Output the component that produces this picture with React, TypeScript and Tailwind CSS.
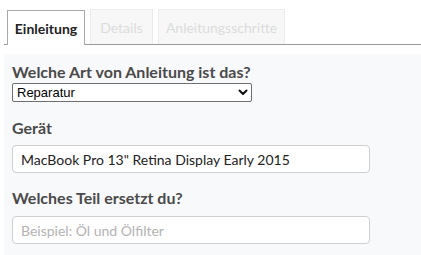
import React from 'react';

const tabs = [
  { label: 'Einleitung', active: true, w: 'w-[78px]' },
  { label: 'Details', active: false, w: 'w-[63px]' },
  { label: 'Anleitungsschritte', active: false, w: 'w-[127px]' },
];

const App: React.FC = () => {
  return (
    <div className="w-[421px] h-[255px] bg-white pl-1 pt-[9px] overflow-hidden" style={{ fontFamily: 'Lato, "Open Sans", sans-serif' }}>
      {/* tab bar */}
      <div className="flex items-end gap-[5px] pl-[3px] h-[36px] border-b border-[#9a9a9a]">
        {tabs.map(t =>
          t.active ? (
            <div
              key={t.label}
              className={`${t.w} h-[35px] -mb-px bg-white border border-b-0 border-[#a8a8a8] flex items-center justify-center text-[14px] font-bold text-[#222]`}
            >
              {t.label}
            </div>
          ) : (
            <div
              key={t.label}
              className={`${t.w} h-[35px] bg-[#f7f7f7] border border-b-0 border-[#ececec] flex items-center justify-center text-[14px] text-[#dcdcdc]`}
            >
              {t.label}
            </div>
          )
        )}
      </div>

      {/* form */}
      <div className="mt-[9px] bg-[#f8f9fa] h-[210px] pl-2 pt-2">
        <label className="block text-[16px] leading-[20px] font-bold text-[#4a4a4a]">Welche Art von Anleitung ist das?</label>
        <div className="relative mt-[1px] w-[240px] h-[19px]">
          <select
            className="appearance-none block w-full h-[19px] bg-white border border-[#6f6f6f] rounded-[2px] pl-[4px] text-[13px] leading-[17px] text-black outline-none"
            style={{ fontFamily: '"Liberation Sans", Arial, sans-serif' }}
            defaultValue="Reparatur"
          >
            <option>Reparatur</option>
            <option>Pflege</option>
            <option>Umbau</option>
          </select>
          <svg className="absolute right-[4px] top-[6px] pointer-events-none" width="10" height="7" viewBox="0 0 10 7">
            <path d="M1.5 1.5 L5 5 L8.5 1.5" fill="none" stroke="#111" strokeWidth="2" strokeLinecap="round" strokeLinejoin="round" />
          </svg>
        </div>

        <label className="block mt-[16px] text-[16px] leading-[20px] font-bold text-[#4a4a4a]">Gerät</label>
        <input
          className="block mt-[7px] w-[358px] h-[28px] bg-white border border-[#cfcfcf] rounded-[4px] px-2 text-[14px] text-[#222] outline-none"
          defaultValue={'MacBook Pro 13" Retina Display Early 2015'}
        />

        <label className="block mt-[15px] text-[16px] leading-[20px] font-bold text-[#4a4a4a]">Welches Teil ersetzt du?</label>
        <input
          className="block mt-[8px] w-[358px] h-[28px] bg-white border border-[#cfcfcf] rounded-[4px] px-2 text-[14px] text-[#222] placeholder:text-[#b3b3b3] outline-none"
          placeholder="Beispiel: Öl und Ölfilter"
        />
      </div>
    </div>
  );
};

export default App;
